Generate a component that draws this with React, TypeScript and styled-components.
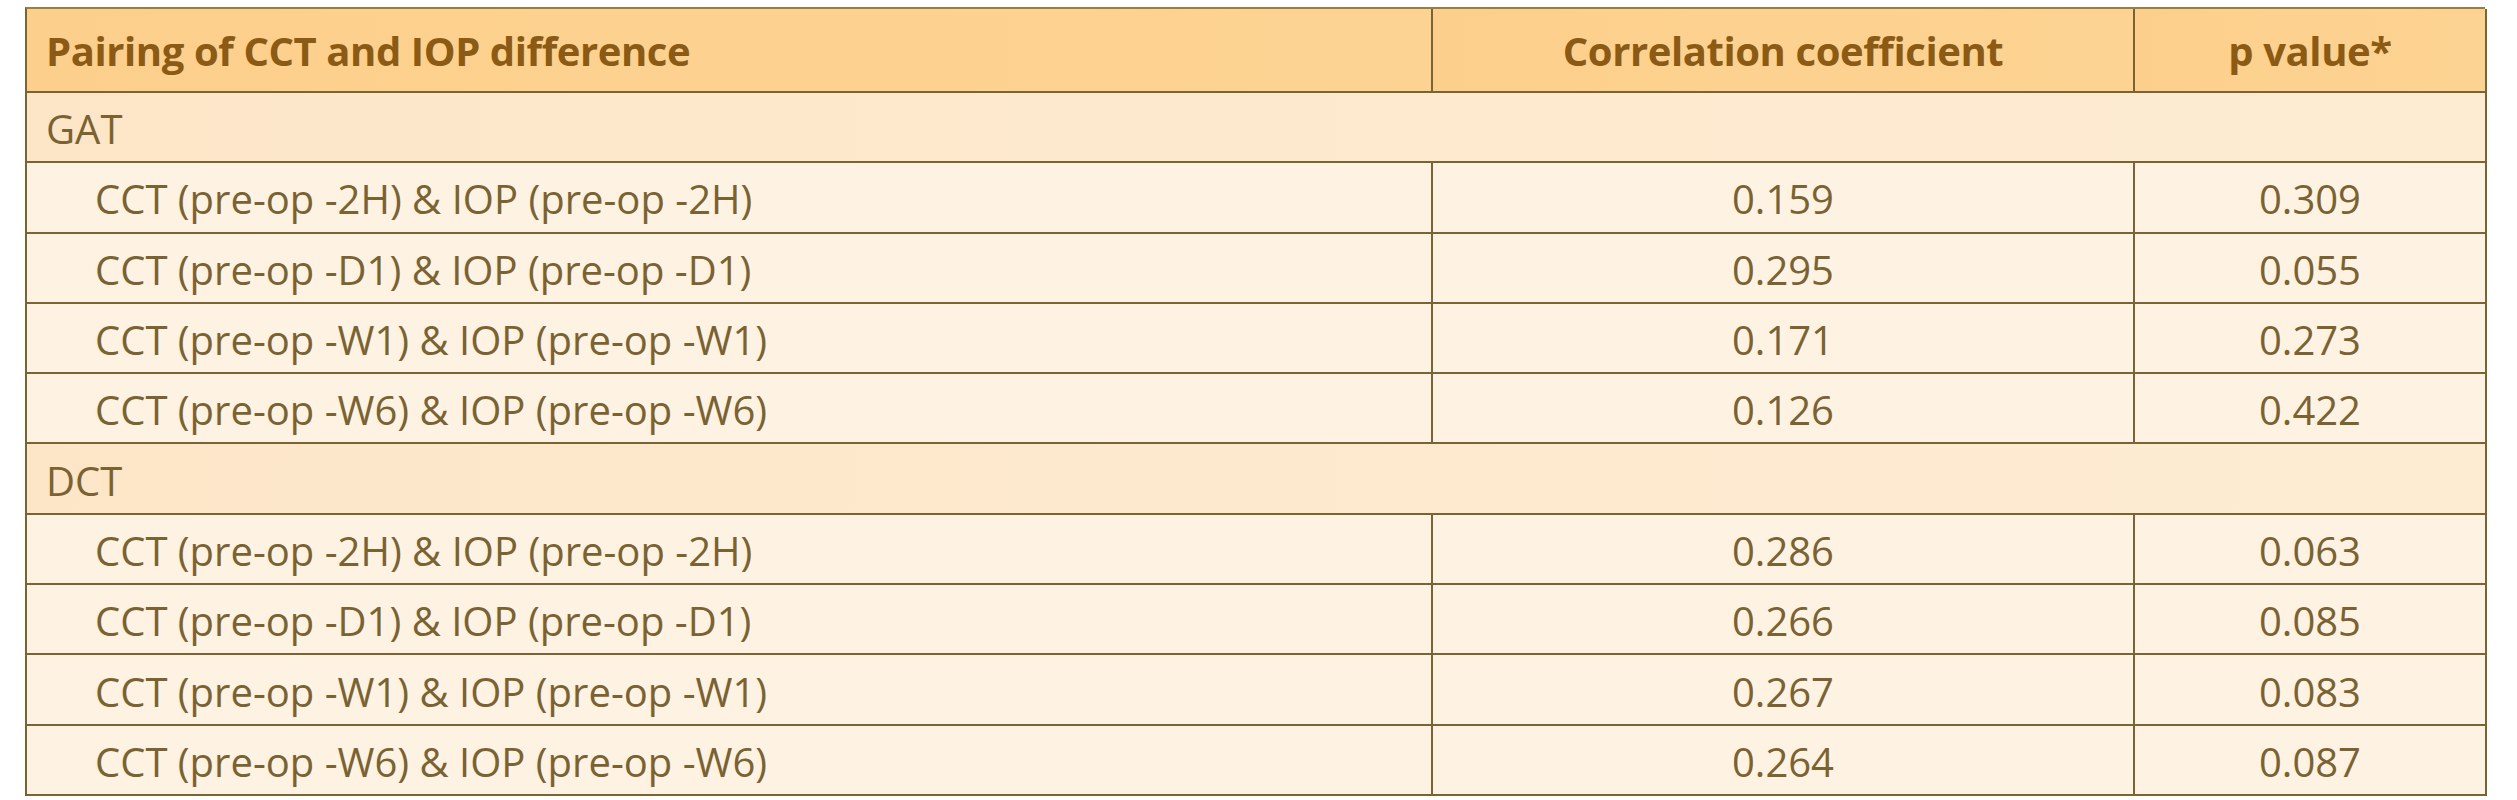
import React from "react";
import styled, { createGlobalStyle } from "styled-components";

const GlobalStyle = createGlobalStyle`
  html, body {
    margin: 0;
    padding: 0;
    background: #ffffff;
  }
  body {
    font-family: "Open Sans", "Noto Sans", sans-serif;
  }
`;

const Page = styled.div`
  padding: 7px 0 0 25px;
`;

const Table = styled.div`
  display: grid;
  grid-template-columns: 1406px 702px 352px;
  width: 2460px;
  border-top: 2px solid #9a7d48;
  border-left: 2px solid #7a6434;
  box-sizing: border-box;
`;

const Cell = styled.div<{ $kind: "head" | "section" | "data"; $align: "left" | "center"; $indent?: boolean; $span?: boolean }>`
  display: flex;
  align-items: center;
  justify-content: ${(p) => (p.$align === "center" ? "center" : "flex-start")};
  box-sizing: border-box;
  height: ${(p) => (p.$kind === "head" ? "84px" : "70.3px")};
  padding-left: ${(p) => (p.$align === "center" ? "0" : p.$indent ? "68px" : "19px")};
  padding-top: ${(p) => (p.$kind === "head" ? "0" : "3px")};
  grid-column: ${(p) => (p.$span ? "1 / -1" : "auto")};
  border-right: 2px solid #7a6434;
  border-bottom: 2px solid #7a6434;
  background: ${(p) =>
    p.$kind === "head"
      ? "linear-gradient(90deg, #fdcf8c 0%, #fdd290 60%, #fdd393 100%)"
      : p.$kind === "section"
      ? "linear-gradient(90deg, #fde6c8 0%, #fdeacf 60%, #fdebd2 100%)"
      : "#fef3e3"};
  color: ${(p) => (p.$kind === "head" ? "#8b5a14" : "#7b6232")};
  font-size: 40px;
  font-weight: ${(p) => (p.$kind === "head" ? 700 : 400)};
  letter-spacing: ${(p) => (p.$kind === "head" ? "-0.4px" : "0")};
  white-space: nowrap;
`;

type Row = { label: string; r: string; p: string };
type Group = { name: string; rows: Row[] };

const groups: Group[] = [
  {
    name: "GAT",
    rows: [
      { label: "CCT (pre-op -2H) & IOP (pre-op -2H)", r: "0.159", p: "0.309" },
      { label: "CCT (pre-op -D1) & IOP (pre-op -D1)", r: "0.295", p: "0.055" },
      { label: "CCT (pre-op -W1) & IOP (pre-op -W1)", r: "0.171", p: "0.273" },
      { label: "CCT (pre-op -W6) & IOP (pre-op -W6)", r: "0.126", p: "0.422" },
    ],
  },
  {
    name: "DCT",
    rows: [
      { label: "CCT (pre-op -2H) & IOP (pre-op -2H)", r: "0.286", p: "0.063" },
      { label: "CCT (pre-op -D1) & IOP (pre-op -D1)", r: "0.266", p: "0.085" },
      { label: "CCT (pre-op -W1) & IOP (pre-op -W1)", r: "0.267", p: "0.083" },
      { label: "CCT (pre-op -W6) & IOP (pre-op -W6)", r: "0.264", p: "0.087" },
    ],
  },
];

export default function App() {
  return (
    <>
      <GlobalStyle />
      <Page>
        <Table>
          <Cell $kind="head" $align="left">Pairing of CCT and IOP difference</Cell>
          <Cell $kind="head" $align="center">Correlation coefficient</Cell>
          <Cell $kind="head" $align="center">p value*</Cell>
          {groups.map((g) => (
            <React.Fragment key={g.name}>
              <Cell $kind="section" $align="left" $span>
                {g.name}
              </Cell>
              {g.rows.map((row) => (
                <React.Fragment key={row.label}>
                  <Cell $kind="data" $align="left" $indent>
                    {row.label}
                  </Cell>
                  <Cell $kind="data" $align="center">{row.r}</Cell>
                  <Cell $kind="data" $align="center">{row.p}</Cell>
                </React.Fragment>
              ))}
            </React.Fragment>
          ))}
        </Table>
      </Page>
    </>
  );
}
